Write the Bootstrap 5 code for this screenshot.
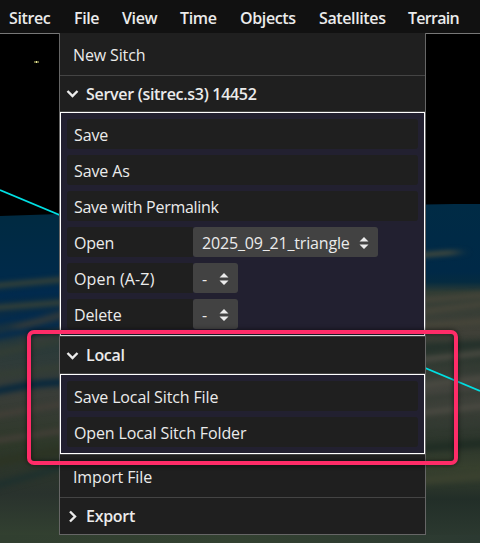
<!DOCTYPE html>
<html lang="en" data-bs-theme="dark">
<head>
<meta charset="utf-8">
<meta name="viewport" content="width=device-width, initial-scale=1">
<title>Sitrec</title>
<link href="https://cdn.jsdelivr.net/npm/bootstrap@5.3.0/dist/css/bootstrap.min.css" rel="stylesheet">
<style>
body{width:480px;height:543px;background:#000;color:#ebebeb;font:16px/30px "Open Sans","Noto Sans",sans-serif;letter-spacing:-.13px}
.scene{left:0;top:0;z-index:0}
.menubar{height:33px;background:#111;line-height:36px;padding-left:9px;font-weight:600;font-size:16px;letter-spacing:-.38px}
.menubar .w1{width:65px}.menubar .w2{width:48px}.menubar .w3{width:58px}.menubar .w4{width:60px}
.menubar .w5{width:79px}.menubar .w6{width:89px}.menubar .w7{letter-spacing:-.7px}
.topline{height:1px;background:#777;margin-bottom:-1px}
.panel{width:367px;margin-left:59px;background:#1f1f1f;border:1px solid #666;border-top:0;height:502px}
.plain{height:42px;line-height:44px;padding-left:13px}
.rule{border-bottom:1px solid #444}
.heading{height:36px;line-height:35px;padding-left:6px;font-weight:600;letter-spacing:-.3px}
.heading svg{width:13px;height:13px;margin-right:7px}
.heading.first span{padding-top:2px}
.heading.tall{height:37px}
.group{border:1px solid #fff;background:#222030;padding:6px;gap:6px}
.item{height:30px;background:#1f1f1f;border-radius:3px;padding-left:7px;line-height:32px}
.snug{letter-spacing:-.28px}
.tight{letter-spacing:-.2px}
.airy{letter-spacing:.15px}
.short{width:126px;border-radius:3px 0 0 3px}
.pick{height:30px;background:#424242;border-radius:3px;line-height:30px;padding:0 9px;letter-spacing:-.17px}
.pick span{padding-top:2px}
.pick svg{width:10px;height:14px;margin-top:1px}
.wide{width:185px}.tiny{width:45px}
.marker{left:27px;top:330px;width:431px;height:135px;border:4px solid #ff2c68;border-radius:7px;box-shadow:0 0 5px #0009,inset 0 0 5px #0009;z-index:3}
</style>
<script src="https://cdn.jsdelivr.net/npm/bootstrap@5.3.0/dist/js/bootstrap.bundle.min.js"></script>
</head>
<body class="position-relative overflow-hidden m-0">
<svg class="scene position-absolute" width="480" height="543" viewBox="0 0 480 543" aria-hidden="true">
  <defs>
    <linearGradient id="west" x1="0" y1="215" x2="0" y2="543" gradientUnits="userSpaceOnUse">
      <stop offset="0" stop-color="#002a41"/><stop offset=".19" stop-color="#002a4a"/><stop offset=".3" stop-color="#082b46"/><stop offset=".4" stop-color="#2a3a39"/><stop offset=".55" stop-color="#393d38"/><stop offset=".7" stop-color="#2e3829"/><stop offset=".85" stop-color="#29322d"/><stop offset="1" stop-color="#344331"/>
    </linearGradient>
    <linearGradient id="east" x1="0" y1="204" x2="0" y2="543" gradientUnits="userSpaceOnUse">
      <stop offset="0" stop-color="#002b45"/><stop offset=".2" stop-color="#002947"/><stop offset=".23" stop-color="#052b40"/><stop offset=".26" stop-color="#303c34"/><stop offset=".38" stop-color="#404038"/><stop offset=".44" stop-color="#29352d"/><stop offset=".55" stop-color="#42433d"/><stop offset=".7" stop-color="#2b352b"/><stop offset=".78" stop-color="#37402e"/><stop offset=".87" stop-color="#222e28"/><stop offset="1" stop-color="#2d3b31"/>
    </linearGradient>
    <linearGradient id="ground"><stop offset="0" stop-color="#313f30"/><stop offset=".5" stop-color="#334131"/><stop offset="1" stop-color="#2b3931"/></linearGradient>
    <filter id="soft" x="-20%" y="-20%" width="140%" height="140%" color-interpolation-filters="sRGB"><feGaussianBlur stdDeviation="7 2.4"/></filter>
    <clipPath id="land"><path d="M0 216L60 214L426 204H480V543H0Z"/></clipPath>
  </defs>
  <path d="M0 216L30 215L60 214H240V543H0Z" fill="url(#west)"/>
  <path d="M240 208L426 204.500L455 204H480V543H240Z" fill="url(#east)"/>
  <g clip-path="url(#land)"><g filter="url(#soft)" fill="none" stroke-width="5">
    <path d="M-20 287L80 278M-20 309L80 301" stroke="#3a4336"/>
    <path d="M15 328L75 311M25 342L75 330" stroke="#3c3d38"/>
    <path d="M-20 298L80 289M-20 323L45 314M-20 340L80 320" stroke="#002a50"/>
    <path d="M-20 357L80 337M-20 377L80 365" stroke="#343e34"/>
    <path d="M-20 394L35 384L80 381" stroke="#08283d" stroke-width="7"/>
    <path d="M-20 418L80 401M-20 443L80 428" stroke="#443f38"/>
    <path d="M-20 465L80 447" stroke="#2c3424" stroke-width="9"/>
    <path d="M-20 490L80 462" stroke="#1d302e" stroke-width="6"/>
    <path d="M410 256L458 252" stroke="#55523a" stroke-width="4"/>
    <path d="M410 301L500 294M410 313L500 302M410 327L500 320" stroke="#48463a"/>
    <path d="M410 349L500 343" stroke="#24312b" stroke-width="7"/>
    <path d="M410 361L500 351M410 387L500 376M410 414L500 404" stroke="#4c4b43"/>
    <path d="M410 374L500 364M410 401L500 390M410 425L500 422" stroke="#343b33" stroke-width="4"/>
    <path d="M410 449L500 442" stroke="#202d24" stroke-width="8"/>
    <path d="M410 481L500 474" stroke="#3a412f" stroke-width="9"/>
  </g></g>
  <rect y="535" width="480" height="8" fill="url(#ground)"/>
  <path d="M0 190L480 391" stroke="#00dfe3" stroke-width="1.700"/>
  <rect x="34" y="61" width="5" height="2" fill="#66663a"/><rect x="36" y="61" width="1" height="2" fill="#eeee9e"/>
</svg>
<nav class="menubar d-flex position-relative">
  <span class="w1">Sitrec</span><span class="w2">File</span><span class="w3">View</span><span class="w4">Time</span><span class="w5">Objects</span><span class="w6">Satellites</span><span class="w7">Terrain</span>
</nav>
<div class="topline position-relative"></div>
<main class="panel position-relative">
  <div class="plain">New Sitch</div>
  <div class="rule"></div>
  <div class="heading first rule d-flex align-items-center"><svg viewBox="0 0 13 13"><path d="M1.500 4L6.500 9L11.500 4" fill="none" stroke="#ebebeb" stroke-width="2.400"/></svg><span>Server (sitrec.s3) 14452</span></div>
  <section class="group d-flex flex-column">
    <div class="item">Save</div>
    <div class="item">Save As</div>
    <div class="item snug">Save with Permalink</div>
    <div class="d-flex"><div class="item short tight">Open</div><div class="pick wide d-flex align-items-center justify-content-between"><span>2025_09_21_triangle</span><svg viewBox="0 0 10 14"><path d="M.5 5.500L5 1L9.500 5.500ZM.5 8.500H9.500L5 13Z" fill="#ebebeb"/></svg></div></div>
    <div class="d-flex"><div class="item short airy">Open (A-Z)</div><div class="pick tiny d-flex align-items-center justify-content-between"><span>-</span><svg viewBox="0 0 10 14"><path d="M.5 5.500L5 1L9.500 5.500ZM.5 8.500H9.500L5 13Z" fill="#ebebeb"/></svg></div></div>
    <div class="d-flex"><div class="item short">Delete</div><div class="pick tiny d-flex align-items-center justify-content-between"><span>-</span><svg viewBox="0 0 10 14"><path d="M.5 5.500L5 1L9.500 5.500ZM.5 8.500H9.500L5 13Z" fill="#ebebeb"/></svg></div></div>
  </section>
  <div class="rule"></div>
  <div class="heading tall rule d-flex align-items-center"><svg viewBox="0 0 13 13"><path d="M1.500 4L6.500 9L11.500 4" fill="none" stroke="#ebebeb" stroke-width="2.400"/></svg><span>Local</span></div>
  <section class="group d-flex flex-column">
    <div class="item">Save Local Sitch File</div>
    <div class="item">Open Local Sitch Folder</div>
  </section>
  <div class="rule"></div>
  <div class="plain">Import File</div>
  <div class="rule"></div>
  <div class="heading d-flex align-items-center"><svg viewBox="0 0 13 13"><path d="M4 1.500L9 6.500L4 11.500" fill="none" stroke="#ebebeb" stroke-width="2.400"/></svg><span>Export</span></div>
</main>
<div class="marker position-absolute"></div>
</body>
</html>
